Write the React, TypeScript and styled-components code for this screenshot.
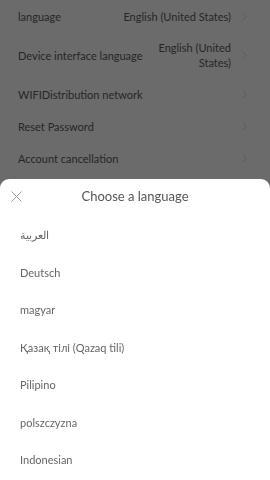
import React from "react";
import styled, { createGlobalStyle } from "styled-components";

const Global = createGlobalStyle`
  html, body { margin: 0; padding: 0; background: #fff; }
  body { font-family: Lato, "Noto Sans", sans-serif; -webkit-font-smoothing: antialiased; }
  * { box-sizing: border-box; }
`;

const Page = styled.div`
  display: flex;
  flex-direction: column;
  background: #fff;
  min-height: 480px;
`;

const SettingRow = styled.div<{ $tall?: boolean }>`
  display: flex;
  align-items: center;
  justify-content: space-between;
  height: ${(p) => (p.$tall ? 46 : 32)}px;
  padding: 0 23px 0 18px;
  font-size: 11px;
  color: #5c5c5c;
`;

const Label = styled.span`
  white-space: nowrap;
`;

const ValueWrap = styled.div`
  display: flex;
  align-items: center;
  gap: 11px;
`;

const Value = styled.span<{ $narrow?: boolean }>`
  text-align: right;
  line-height: 15px;
  max-width: ${(p) => (p.$narrow ? "80px" : "none")};
`;

const Chevron = styled.svg`
  width: 5px;
  height: 9px;
  flex: none;
`;

const Overlay = styled.div`
  position: fixed;
  inset: 0;
  background: rgba(0, 0, 0, 0.58);
  display: flex;
  flex-direction: column;
  justify-content: flex-end;
`;

const Sheet = styled.div`
  background: #fff;
  border-radius: 9px 9px 0 0;
  height: 301px;
  display: flex;
  flex-direction: column;
  overflow: hidden;
`;

const Header = styled.div`
  position: relative;
  height: 34px;
  margin-bottom: 3px;
  display: flex;
  align-items: center;
  justify-content: center;
  font-size: 13px;
  color: #555;
  flex: none;
`;

const CloseButton = styled.button`
  position: absolute;
  left: 9px;
  top: 10px;
  width: 14px;
  height: 14px;
  padding: 0;
  border: 0;
  background: none;
  display: flex;
  align-items: center;
  justify-content: center;
`;

const List = styled.div`
  display: flex;
  flex-direction: column;
`;

const Item = styled.div`
  height: 37.5px;
  display: flex;
  align-items: center;
  padding: 0 20px;
  font-size: 11px;
  color: #666;
  flex: none;
`;

const ChevronIcon = () => (
  <Chevron viewBox="0 0 5 9">
    <path d="M0.8 0.8 L4.2 4.5 L0.8 8.2" fill="none" stroke="#d6d6d6" strokeWidth="1" />
  </Chevron>
);

const settings = [
  { label: "language", value: "English (United States)" },
  { label: "Device interface language", value: "English (United States)", tall: true },
  { label: "WIFIDistribution network", value: "" },
  { label: "Reset Password", value: "" },
  { label: "Account cancellation", value: "" },
];

const languages = [
  "العربية",
  "Deutsch",
  "magyar",
  "Қазақ тілі (Qazaq tili)",
  "Pilipino",
  "polszczyzna",
  "Indonesian",
];

export default function App() {
  return (
    <>
      <Global />
      <Page>
        {settings.map((s) => (
          <SettingRow key={s.label} $tall={s.tall}>
            <Label>{s.label}</Label>
            <ValueWrap>
              {s.value && <Value $narrow={s.tall}>{s.value}</Value>}
              <ChevronIcon />
            </ValueWrap>
          </SettingRow>
        ))}
      </Page>
      <Overlay>
        <Sheet>
          <Header>
            <CloseButton aria-label="close">
              <svg width="11" height="11" viewBox="0 0 11 11">
                <path d="M0.5 0.5 L10.5 10.5 M10.5 0.5 L0.5 10.5" stroke="#999" strokeWidth="1" fill="none" />
              </svg>
            </CloseButton>
            Choose a language
          </Header>
          <List>
            {languages.map((l) => (
              <Item key={l}>{l}</Item>
            ))}
          </List>
        </Sheet>
      </Overlay>
    </>
  );
}
